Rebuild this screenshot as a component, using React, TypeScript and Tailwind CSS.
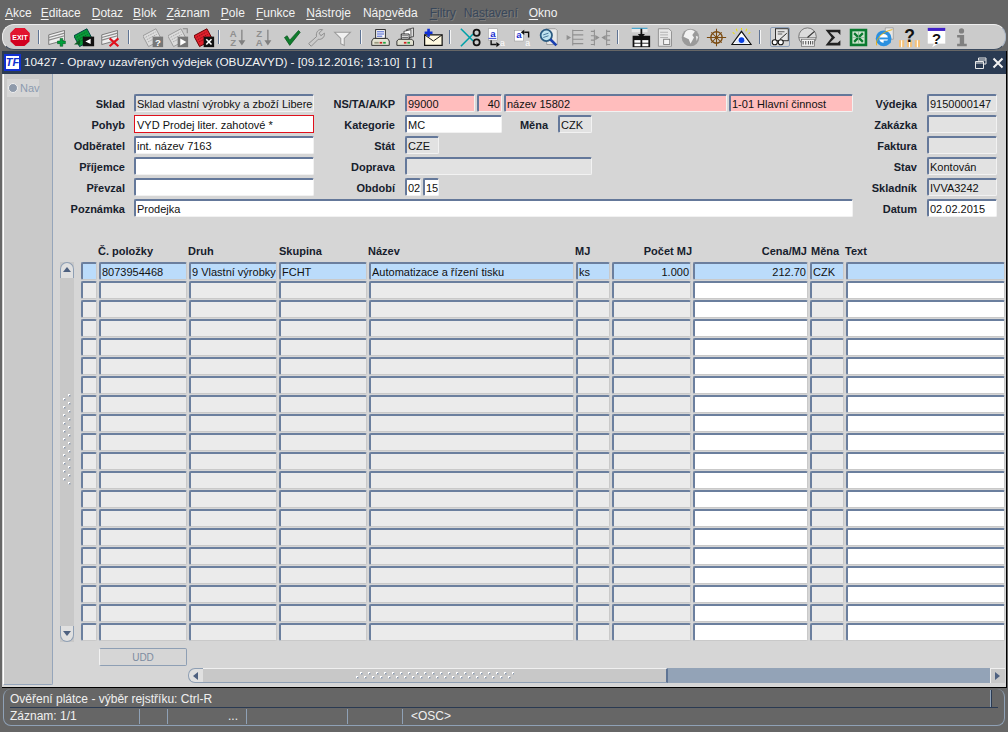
import React from "react";

const bevel =
  "border-t-2 border-l-2 border-r border-b border-t-[#64789a] border-l-[#64789a] border-r-[#f2f2f2] border-b-[#f2f2f2] rounded-[2px]";
const bevelCell =
  "border-t-2 border-l-2 border-r border-b border-t-[#6b7f9e] border-l-[#6b7f9e] border-r-[#c9c9c9] border-b-[#c9c9c9] rounded-[2px]";

function Field({
  w,
  bg = "bg-[#e2e2e2]",
  right,
  focus,
  cell,
  children,
}: {
  w: string;
  bg?: string;
  right?: boolean;
  focus?: boolean;
  cell?: boolean;
  children?: React.ReactNode;
}) {
  const border = focus
    ? "border border-[#e0101c] pl-[2px] pt-[1px]"
    : `${cell ? bevelCell : bevel} pl-[1px]`;
  return (
    <div
      className={`${w} ${bg} ${border} h-[18px] shrink-0 overflow-hidden whitespace-nowrap pr-[1px] text-[11px] leading-[16px] text-[#111] ${
        right ? "text-right" : ""
      }`}
    >
      {children}
    </div>
  );
}

function Lbl({ w, children }: { w: string; children: React.ReactNode }) {
  return (
    <div className={`${w} shrink-0 pt-[2px] text-right text-[11px] leading-[16px] font-bold text-[#16202c]`}>
      {children}
    </div>
  );
}

function Row({ children }: { children: React.ReactNode }) {
  return <div className="flex h-[18px] items-start">{children}</div>;
}

/* ---------- Toolbar icons ---------- */
function I({ children }: { children: React.ReactNode }) {
  return (
    <svg width="21" height="21" viewBox="0 0 24 24" className="m-[1.5px] block">
      {children}
    </svg>
  );
}

function Sheet({ dark = "#8a8a8a" }: { dark?: string }) {
  return (
    <g>
      <path d="M2 9 L20 4 L20 15 L2 20 Z" fill="#efefef" stroke="#555" strokeWidth="0.8" />
      <path d="M2 12 L20 7 M2 15 L20 10" stroke={dark} strokeWidth="1.4" />
    </g>
  );
}

function Card({ fill = "#dcdcdc", stroke = "#9a9a9a", dot = "#a8a8a8" }: { fill?: string; stroke?: string; dot?: string }) {
  return (
    <g transform="rotate(-28 11 12)">
      <rect x="2" y="5" width="17" height="14" fill={fill} stroke={stroke} strokeWidth="1" />
      <path d="M4 8 H17 M4 11 H17 M4 14 H14" stroke={dot} strokeWidth="1" strokeDasharray="2 1" />
    </g>
  );
}

const Exit = () => (
  <svg width="24" height="24" viewBox="0 0 24 24" className="block">
    <path d="M7.5 3 H16.5 L21.5 8 V16.5 L16.5 21 H7.5 L2.5 16.5 V8 Z" fill="#d2001f" />
    <path d="M7.5 3 H16.5 L21.5 8 V12 H2.5 V8 Z" fill="#e2142f" />
    <text x="12" y="14.6" textAnchor="middle" fontSize="7" fontWeight="700" fill="#fff" fontFamily="Liberation Sans, sans-serif">
      EXIT
    </text>
  </svg>
);
const AddRec = () => (
  <I>
    <Sheet />
    <path d="M15 13 h3 v3 h3 v3 h-3 v3 h-3 v-3 h-3 v-3 h3 z" fill="#00a03c" stroke="#004d18" strokeWidth="0.6" />
  </I>
);
const GreenRec = () => (
  <I>
    <Card fill="#0a9a3a" stroke="#044" dot="#066a28" />
    <path d="M0 20 L7 20 L7 14 Z" fill="#0b5d22" />
    <rect x="10" y="11" width="13" height="11" fill="#111" />
    <path d="M13 16.5 L19 13.5 V19.5 Z" fill="#fff" />
  </I>
);
const DelRec = () => (
  <I>
    <Sheet />
    <path d="M11 13 L21 22 M21 13 L11 22" stroke="#e0101c" strokeWidth="2.4" />
  </I>
);
const DocQ = () => (
  <I>
    <Card />
    <rect x="11" y="11" width="12" height="12" fill="#777" />
    <text x="17" y="21.5" textAnchor="middle" fontSize="11" fontWeight="700" fill="#fff" fontFamily="Liberation Sans, sans-serif">
      ?
    </text>
  </I>
);
const DocPlay = () => (
  <I>
    <Card />
    <path d="M17 2 H22 V7" stroke="#888" fill="none" strokeWidth="1.2" />
    <rect x="11" y="11" width="12" height="12" fill="#777" />
    <path d="M14 13 L21 17 L14 21 Z" fill="#fff" />
  </I>
);
const DocRed = () => (
  <I>
    <Card fill="#e0202c" stroke="#600" dot="#901018" />
    <rect x="11" y="11" width="12" height="12" fill="#111" />
    <path d="M14 14 L20 20 M20 14 L14 20" stroke="#fff" strokeWidth="1.8" />
  </I>
);
const SortAZ = ({ flip }: { flip?: boolean }) => (
  <I>
    <text x="7" y="11" textAnchor="middle" fontSize="11" fontWeight="700" fill="#8f8f8f" fontFamily="Liberation Sans, sans-serif">
      {flip ? "Z" : "A"}
    </text>
    <text x="7" y="22" textAnchor="middle" fontSize="11" fontWeight="700" fill="#8f8f8f" fontFamily="Liberation Sans, sans-serif">
      {flip ? "A" : "Z"}
    </text>
    <path d="M17 3 V17" stroke="#808080" strokeWidth="1.4" />
    <path d="M13 15 H21 L17 21 Z" fill="#808080" />
  </I>
);
const Check = () => (
  <I>
    <path d="M4 12 L7 10 L10 15 L20 4 L22 6 L10 21 Z" fill="#0f7d2c" stroke="#07501b" strokeWidth="0.8" />
  </I>
);
const Wrench = () => (
  <I>
    <path
      d="M3 19 L12 11 C11 6 14 2 19 3 L15 7 L17 10 L21 7 C22 11 18 15 14 14 L6 22 Z"
      fill="none"
      stroke="#8c8c8c"
      strokeWidth="1.1"
    />
  </I>
);
const Funnel = () => (
  <I>
    <path d="M3 6 H21 L14 13 V21 L10 19 V13 Z" fill="#f0f0f0" stroke="#9a9a9a" strokeWidth="1.2" />
  </I>
);
const Printer = () => (
  <I>
    <rect x="6.5" y="3" width="11" height="10" fill="#fff" stroke="#111" strokeWidth="1" />
    <path d="M8 5.5 H16 M8 8 H16 M8 10.5 H14" stroke="#2440c0" strokeWidth="1" />
    <path d="M4 13 H20 L22 16 V21 H2 V16 Z" fill="#e4e4d4" stroke="#222" strokeWidth="1" />
    <rect x="11" y="17" width="3" height="2" fill="#d02020" />
    <rect x="15" y="17" width="3" height="2" fill="#20a040" />
    <rect x="5" y="17" width="5" height="2" fill="#9a9a80" />
  </I>
);
const Printers = () => (
  <I>
    <path d="M12 3 L20 1 V11 L14 12 Z" fill="#ddd" stroke="#222" strokeWidth="0.8" />
    <path d="M9 5 L17 3 V12 L10 13 Z" fill="#fff" stroke="#222" strokeWidth="0.8" />
    <path d="M6 8 H15 V14 H6 Z" fill="#fff" stroke="#111" strokeWidth="1" />
    <path d="M7 10 H14 M7 12 H14" stroke="#555" />
    <path d="M3 14 H18 L20 16 V21 H1 V16 Z" fill="#e0e0d0" stroke="#222" strokeWidth="1" />
    <rect x="9" y="17" width="3" height="2" fill="#d02020" />
    <rect x="13" y="17" width="3" height="2" fill="#20a040" />
  </I>
);
const Mail = () => (
  <I>
    <rect x="3" y="9" width="20" height="12" fill="#fff9e0" stroke="#111" strokeWidth="1.4" />
    <path d="M3 9 L13 16 L23 9" fill="none" stroke="#111" strokeWidth="1.1" />
    <path d="M3 5 h3 v-3 h3 v3 h3 v3 h-3 v3 h-3 v-3 h-3 z" fill="#1030d8" />
  </I>
);
const Scissors = () => (
  <I>
    <path d="M1 2 L15 16" stroke="#00a0a8" strokeWidth="1.8" />
    <path d="M1 22 L15 8" stroke="#00a0a8" strokeWidth="1.8" />
    <ellipse cx="19" cy="6.5" rx="3.5" ry="3.5" fill="none" stroke="#111" strokeWidth="2" />
    <ellipse cx="19" cy="17.5" rx="3.5" ry="3.5" fill="none" stroke="#111" strokeWidth="2" />
  </I>
);
const CopyA = () => (
  <I>
    <rect x="4" y="2" width="10" height="13" fill="#fff" stroke="#999" strokeWidth="0.6" />
    <text x="9" y="11" textAnchor="middle" fontSize="11" fontWeight="700" fill="#1a30d0" fontFamily="Liberation Sans, sans-serif">
      a
    </text>
    <path d="M4 13 H13" stroke="#1a30d0" strokeWidth="1" />
    <path d="M7 15 V20 H13" fill="none" stroke="#111" strokeWidth="1.6" />
    <path d="M13 17 L17 20 L13 23 Z" fill="#111" />
    <text x="20" y="22" textAnchor="middle" fontSize="10" fill="#fff" fontFamily="Liberation Sans, sans-serif">
      a
    </text>
  </I>
);
const PasteA = () => (
  <I>
    <rect x="3" y="4" width="10" height="12" fill="#fff" stroke="#999" strokeWidth="0.6" />
    <text x="8" y="13" textAnchor="middle" fontSize="11" fontWeight="700" fill="#1a30d0" fontFamily="Liberation Sans, sans-serif">
      a
    </text>
    <path d="M19 12 V6 H14" fill="none" stroke="#111" strokeWidth="1.6" />
    <path d="M14 3 L10 6 L14 9 Z" fill="#111" />
    <text x="18" y="22" textAnchor="middle" fontSize="10" fill="#fff" fontFamily="Liberation Sans, sans-serif">
      a
    </text>
  </I>
);
const Magnify = () => (
  <I>
    <path d="M9 2 H20 L22 4 V20 L10 20 Z" fill="#e8e8e8" stroke="#888" strokeWidth="0.8" />
    <circle cx="9.5" cy="9.5" r="6.5" fill="#bfe3f0" stroke="#2a5a80" strokeWidth="2" />
    <path d="M6 9 L12 7 M6 12 L12 10" stroke="#3a6a90" strokeWidth="1" />
    <path d="M14 14 L21 21" stroke="#1a40b0" strokeWidth="3" />
  </I>
);
const ListA = () => (
  <I>
    <path d="M10 3 V21" stroke="#909090" strokeWidth="1.2" />
    <path d="M10 4 H22 M10 9 H22 M10 14 H22 M10 19 H22" stroke="#909090" strokeWidth="1.2" />
    <path d="M3 9 L8 12 L3 15 Z" fill="#909090" />
  </I>
);
const ListB = () => (
  <I>
    <path d="M5 3 V21 M19 3 V21" stroke="#909090" strokeWidth="1.2" />
    <path d="M1 5 H5 M1 10 H5 M1 15 H5 M1 20 H5 M19 5 H23 M19 10 H23 M19 15 H23 M19 20 H23" stroke="#909090" strokeWidth="1.2" />
    <path d="M6 9 L11 12 L6 15 Z M18 9 L13 12 L18 15 Z" fill="#909090" />
  </I>
);
const Form = () => (
  <I>
    <rect x="3" y="10" width="20" height="13" fill="#111" />
    <rect x="5" y="15" width="7" height="3" fill="#fff" />
    <rect x="14" y="15" width="7" height="3" fill="#fff" />
    <rect x="5" y="19" width="7" height="3" fill="#fff" />
    <rect x="14" y="19" width="7" height="3" fill="#fff" />
    <path d="M2 2 H20 V6 H2 Z" fill="#e8e8e8" />
    <path d="M2 1.5 H20" stroke="#30a0d0" strokeWidth="1.2" />
    <path d="M13 2 V9" stroke="#111" strokeWidth="2" />
    <path d="M9 8 H17 L13 13 Z" fill="#111" />
  </I>
);
const Page = () => (
  <I>
    <path d="M5 2 H17 L20 5 V22 H5 Z" fill="#e8e8e8" stroke="#8a8a8a" strokeWidth="1" />
    <path d="M7 6 H16 M7 9 H16 M7 12 H16" stroke="#aaa" strokeWidth="1" />
    <rect x="11" y="14" width="7" height="6" fill="#f4f4f4" stroke="#777" strokeWidth="1" />
  </I>
);
const Globe = () => (
  <I>
    <circle cx="12" cy="12" r="10" fill="#9a9a9a" />
    <path d="M6 6 C9 2 14 3 17 5 L14 9 L16 12 L12 19 L10 14 L4 11 Z" fill="#f2f2f2" />
    <path d="M18 10 L21 11 L19 16 Z" fill="#e4e4e4" />
  </I>
);
const Wheel = () => (
  <I>
    <circle cx="12" cy="12" r="6.5" fill="none" stroke="#7a4a10" strokeWidth="1.6" />
    <circle cx="12" cy="12" r="1.8" fill="#7a4a10" />
    <path d="M12 2 V22 M1 12 H23 M6 6 L18 18 M18 6 L6 18" stroke="#7a4a10" strokeWidth="1.2" />
  </I>
);
const Eye = () => (
  <I>
    <path d="M12 5 L23 20 H1 Z" fill="#fff" stroke="#111" strokeWidth="1.4" />
    <path d="M4 18 Q12 9 20 18 Q12 20 4 18 Z" fill="#dfe8f8" />
    <circle cx="12" cy="15" r="3.2" fill="#0a40e0" />
    <path d="M12 1 V3 M6 2 L7 5 M18 2 L17 5 M2 6 L4 8 M22 6 L20 8" stroke="#f0e000" strokeWidth="1.2" />
  </I>
);
const Glasses = () => (
  <svg width="18" height="18" viewBox="0 0 24 24" className="block">
    <rect x="6" y="1" width="17" height="16" fill="#e4e4e4" stroke="#111" strokeWidth="1.1" />
    <path d="M9 5 H18 M9 8 H15" stroke="#333" strokeWidth="1" />
    <path d="M12 15 L21 7" stroke="#111" strokeWidth="1.2" />
    <circle cx="5" cy="19" r="3.4" fill="#fff" stroke="#111" strokeWidth="1.4" />
    <circle cx="13" cy="19" r="3.4" fill="#fff" stroke="#111" strokeWidth="1.4" />
  </svg>
);
const Gauge = () => (
  <I>
    <circle cx="12" cy="11" r="10" fill="#dcdcdc" stroke="#6a6a6a" strokeWidth="1" />
    <path d="M2 12 H22" stroke="#777" strokeWidth="0.8" />
    <path d="M12 12 L20 5" stroke="#333" strokeWidth="1.4" />
    <rect x="5" y="14" width="15" height="8" fill="#f4f4f4" stroke="#666" strokeWidth="0.8" />
    <path d="M7 16 V20 M10 16 V20 M13 16 V20 M15.5 16 V20 M18 16 V20" stroke="#333" strokeWidth="1" />
  </I>
);
const Sigma = () => (
  <I>
    <path d="M4 3 H21 V9 L18 6 H9 L15 12 L9 18 H18 L21 15 V21 H4 L11 12 Z" fill="#222" />
  </I>
);
const Excel = () => (
  <I>
    <rect x="2" y="2" width="20" height="20" fill="#0a7a30" />
    <rect x="5" y="5" width="14" height="14" fill="#cfe4cf" />
    <path d="M7 7 L17 17 M17 7 L7 17" stroke="#0a7a30" strokeWidth="2.6" />
    <path d="M5 12 H19 M12 5 V19" stroke="#7fb08f" strokeWidth="0.8" />
  </I>
);
const IE = () => (
  <I>
    <path d="M13 1 H22 V14 H12 Z" fill="#e8e8e8" stroke="#888" strokeWidth="0.7" />
    <circle cx="11" cy="13" r="9" fill="#2a90e0" />
    <circle cx="11" cy="13" r="5" fill="#fff" />
    <rect x="6" y="12" width="10" height="2.2" fill="#2a90e0" />
    <rect x="11" y="15.5" width="8" height="3" fill="#2a90e0" />
    <path d="M3 21 C1 14 10 5 21 3" fill="none" stroke="#f0b000" strokeWidth="1" />
  </I>
);
const HelpPeople = () => (
  <I>
    <rect x="0" y="15" width="6" height="8" fill="#f5c27a" />
    <rect x="9" y="15" width="6" height="8" fill="#f5c27a" />
    <rect x="18" y="15" width="6" height="8" fill="#f5c27a" />
    <path d="M3 15 V23 M12 15 V23 M21 15 V23" stroke="#fff" strokeWidth="1.2" />
    <text x="12" y="17" textAnchor="middle" fontSize="20" fontWeight="900" fill="#111" fontFamily="Liberation Sans, sans-serif">
      ?
    </text>
  </I>
);
const HelpWin = () => (
  <I>
    <rect x="2" y="3" width="20" height="16" fill="#fff" />
    <rect x="2" y="1" width="20" height="3.5" fill="#4020c8" />
    <path d="M9 19 L7 23 L14 19 Z" fill="#fff" />
    <text x="12" y="19" textAnchor="middle" fontSize="17" fontWeight="900" fill="#111" fontFamily="Liberation Sans, sans-serif">
      ?
    </text>
  </I>
);
const Info = () => (
  <I>
    <circle cx="12" cy="4.5" r="3" fill="#808080" />
    <path d="M7 9 H15 V19 H18 V22 H7 V19 H10 V12 H7 Z" fill="#808080" />
  </I>
);

function T({ w, children }: { w: string; children: React.ReactNode }) {
  return <div className={`${w} shrink-0`}>{children}</div>;
}
function Sep({ w }: { w: string }) {
  return (
    <div className={`${w} shrink-0 pt-[5px]`}>
      <div className="h-[14px] w-[2px] border-l border-l-[#5f7494] bg-[#f4f4f4]" />
    </div>
  );
}

function Toolbar() {
  return (
    <div className="mx-[2px] flex h-[26px] items-start rounded-[12px] border-t border-r border-b border-l border-t-[#eeeeee] border-r-[#a8b4c4] border-b-[#3b4a5e] border-l-[#eeeeee] bg-[#cbcbcb] pl-[5px]">
      <T w="w-[30px]"><Exit /></T>
      <Sep w="w-[7px]" />
      <T w="w-[27px]"><AddRec /></T>
      <T w="w-[26px]"><GreenRec /></T>
      <T w="w-[30px]"><DelRec /></T>
      <Sep w="w-[13px]" />
      <T w="w-[25px]"><DocQ /></T>
      <T w="w-[26px]"><DocPlay /></T>
      <T w="w-[26px]"><DocRed /></T>
      <Sep w="w-[7px]" />
      <T w="w-[26px]"><SortAZ /></T>
      <T w="w-[28px]"><SortAZ flip /></T>
      <T w="w-[25px]"><Check /></T>
      <T w="w-[26px]"><Wrench /></T>
      <T w="w-[30px]"><Funnel /></T>
      <Sep w="w-[8px]" />
      <T w="w-[26px]"><Printer /></T>
      <T w="w-[26px]"><Printers /></T>
      <T w="w-[29px]"><Mail /></T>
      <Sep w="w-[9px]" />
      <T w="w-[25px]"><Scissors /></T>
      <T w="w-[27px]"><CopyA /></T>
      <T w="w-[26px]"><PasteA /></T>
      <T w="w-[26px]"><Magnify /></T>
      <T w="w-[26px]"><ListA /></T>
      <T w="w-[29px]"><ListB /></T>
      <Sep w="w-[11px]" />
      <T w="w-[24px]"><Form /></T>
      <T w="w-[26px]"><Page /></T>
      <T w="w-[26px]"><Globe /></T>
      <T w="w-[25px]"><Wheel /></T>
      <T w="w-[30px]"><Eye /></T>
      <Sep w="w-[9px]" />
      <T w="w-[27px]">
        <div className="mt-[2px] ml-[2px] flex h-[20px] w-[20px] items-center justify-center rounded-[2px] border border-[#8ea0b8] bg-[#d4d4d4]">
          <Glasses />
        </div>
      </T>
      <T w="w-[25px]"><Gauge /></T>
      <T w="w-[26px]"><Sigma /></T>
      <T w="w-[26px]"><Excel /></T>
      <T w="w-[25px]"><IE /></T>
      <T w="w-[27px]"><HelpPeople /></T>
      <T w="w-[25px]"><HelpWin /></T>
      <T w="w-[24px]"><Info /></T>
    </div>
  );
}

function M({ k, rest, pre, off, ml }: { k: string; rest: string; pre?: string; off?: boolean; ml: string }) {
  return (
    <span className={`${ml} whitespace-nowrap ${off ? "text-[#38475a] [text-shadow:1px_1px_0_#7c7c7c]" : "text-[#f2f2f2]"}`}>
      {pre}
      <span className="underline underline-offset-2">{k}</span>
      {rest}
    </span>
  );
}

function Grip({ vertical }: { vertical?: boolean }) {
  const dots = Array.from({ length: 20 }, (_, i) => i);
  if (vertical) {
    return (
      <svg width="8" height="92" viewBox="0 0 8 92" className="block">
        {dots.slice(0, 12).map((i) => (
          <g key={i}>
            <rect x="5" y={i * 8} width="2" height="2" fill="#fff" />
            <rect x="6" y={i * 8 + 1} width="1.5" height="1.5" fill="#8d9bb0" />
            <rect x="0" y={i * 8 + 4} width="2" height="2" fill="#fff" />
            <rect x="1" y={i * 8 + 5} width="1.5" height="1.5" fill="#8d9bb0" />
          </g>
        ))}
      </svg>
    );
  }
  return (
    <svg width="158" height="7" viewBox="0 0 158 7" className="block">
      {dots.map((i) => (
        <g key={i}>
          <rect x={i * 8 + 4} y="0" width="2" height="2" fill="#fff" />
          <rect x={i * 8 + 5} y="1" width="1.5" height="1.5" fill="#8d9bb0" />
          <rect x={i * 8} y="4" width="2" height="2" fill="#fff" />
          <rect x={i * 8 + 1} y="5" width="1.5" height="1.5" fill="#8d9bb0" />
        </g>
      ))}
    </svg>
  );
}

function Tri({ dir }: { dir: "up" | "down" | "left" | "right" }) {
  const p = {
    up: "M1 6 L9 6 L5 1 Z",
    down: "M1 2 L9 2 L5 7 Z",
    left: "M7 1 L7 9 L2 5 Z",
    right: "M2 1 L2 9 L7 5 Z",
  }[dir];
  return (
    <svg width="10" height="10" viewBox="0 0 10 10" className="block">
      <path d={p} fill="#4e6180" />
    </svg>
  );
}

const emptyRows = Array.from({ length: 19 }, (_, i) => i);
const grey = "bg-[#ebebeb]";
const white = "bg-white";
const sel = "bg-[#bbdcfb]";
const cols = "grid grid-cols-[16px_88px_88px_88px_205px_34px_79px_115px_34px_159px] gap-x-[2px]";

function Cell({ bg, right, children }: { bg: string; right?: boolean; children?: React.ReactNode }) {
  return <Field w="w-full" bg={bg} right={right} cell>{children}</Field>;
}

function H({ children, right, cls = "" }: { children?: React.ReactNode; right?: boolean; cls?: string }) {
  return (
    <div className={`whitespace-nowrap text-[11px] leading-[16px] font-bold text-[#16202c] ${right ? "text-right" : ""} ${cls}`}>
      {children}
    </div>
  );
}

export default function App() {
  return (
    <div className="flex h-[732px] w-[1008px] flex-col overflow-hidden bg-[#666666] font-['Liberation_Sans',Arial,sans-serif]">
      {/* menu */}
      <div className="flex h-[24px] items-center pt-[2px] text-[12px]">
        <M ml="ml-[5px]" k="A" rest="kce" />
        <M ml="ml-[9px]" k="E" rest="ditace" />
        <M ml="ml-[11px]" k="D" rest="otaz" />
        <M ml="ml-[10px]" k="B" rest="lok" />
        <M ml="ml-[10px]" k="Z" rest="áznam" />
        <M ml="ml-[11px]" k="P" rest="ole" />
        <M ml="ml-[11px]" k="F" rest="unkce" />
        <M ml="ml-[11px]" k="N" rest="ástroje" />
        <M ml="ml-[12px]" pre="Náp" k="o" rest="věda" />
        <M ml="ml-[12px]" off k="F" rest="iltry" />
        <M ml="ml-[8px]" off pre="Na" k="s" rest="tavení" />
        <M ml="ml-[11px]" k="O" rest="kno" />
      </div>

      <Toolbar />

      {/* window */}
      <div className="mt-px mr-[1px] ml-[2px] flex h-[637px] flex-col border-r border-b border-r-black border-b-black">
        {/* title */}
        <div className="flex h-[23px] shrink-0 items-center bg-[#2a3a52] pl-[2px] text-[11.8px] text-[#f4f4f4]">
          <div className="mr-[3px] flex h-[17px] w-[17px] shrink-0 items-center justify-center border-2 border-[#1030d0] bg-white text-[11px] leading-none font-bold italic text-[#1030d0]">
            TF
          </div>
          <span className="whitespace-nowrap">10427 - Opravy uzavřených výdejek (OBUZAVYD) - [09.12.2016; 13:10]&nbsp; [ ]&nbsp; [ ]</span>
          <div className="ml-auto flex items-center gap-[5px] pr-[2px]">
            <svg width="12" height="12" viewBox="0 0 12 12" className="block">
              <path d="M3.5 3.5 V1 H11 V7 H8.5 M3.5 3 H11" fill="none" stroke="#e8e8e8" strokeWidth="1" />
              <path d="M0.5 4.5 H8.5 V11.5 H0.5 Z M0.5 6 H8.5" fill="none" stroke="#e8e8e8" strokeWidth="1" />
            </svg>
            <svg width="12" height="12" viewBox="0 0 12 12" className="block">
              <path d="M1.5 1.5 L10.5 10.5 M10.5 1.5 L1.5 10.5" stroke="#f2f2f2" strokeWidth="2" />
            </svg>
          </div>
        </div>

        {/* body */}
        <div className="flex min-h-0 flex-1 bg-[#d6d6d6]">
          {/* nav */}
          <div className="mb-[2px] ml-px flex w-[50px] shrink-0 flex-col rounded-br-[2px] border-r border-b border-l border-r-[#95a5ba] border-b-[#95a5ba] border-l-white bg-[#c9c9c9] pt-[5px] pl-[3px]">
            <div className="flex h-[18px] w-[32px] items-center bg-[#d6d6d6] text-[11px] text-[#8c9bb0]">
              <span className="mr-[2px] ml-[1px] h-[10px] w-[10px] shrink-0 rounded-full border border-[#f0f0f0] bg-[#8e9aab]" />
              Nav
            </div>
          </div>

          {/* main */}
          <div className="flex min-w-0 flex-1 flex-col pt-[20px]">
            <div className="flex">
              <div className="flex w-[800px] shrink-0 flex-col gap-[3px]">
                <div className="flex">
                  <div className="flex flex-col gap-[3px]">
                    <Row><Lbl w="w-[72px]">Sklad</Lbl><div className="w-[9px]" /><Field w="w-[180px]">Sklad vlastní výrobky a zboží Liberec</Field></Row>
                    <Row><Lbl w="w-[72px]">Pohyb</Lbl><div className="w-[9px]" /><Field w="w-[180px]" bg={white} focus>VYD Prodej liter. zahotové *</Field></Row>
                    <Row><Lbl w="w-[72px]">Odběratel</Lbl><div className="w-[9px]" /><Field w="w-[180px]" bg={white}>int. název 7163</Field></Row>
                    <Row><Lbl w="w-[72px]">Příjemce</Lbl><div className="w-[9px]" /><Field w="w-[180px]" bg={white} /></Row>
                    <Row><Lbl w="w-[72px]">Převzal</Lbl><div className="w-[9px]" /><Field w="w-[180px]" bg={white} /></Row>
                  </div>
                  <div className="flex flex-col gap-[3px]">
                    <Row>
                      <Lbl w="w-[81px]">NS/TA/A/KP</Lbl><div className="w-[10px]" />
                      <div className="flex gap-[2px]">
                        <Field w="w-[70px]" bg="bg-[#ffbdbd]">99000</Field>
                        <Field w="w-[25px]" bg="bg-[#ffbdbd]" right>40</Field>
                        <Field w="w-[223px]" bg="bg-[#ffbdbd]">název 15802</Field>
                        <Field w="w-[124px]" bg="bg-[#ffbdbd]">1-01 Hlavní činnost</Field>
                      </div>
                    </Row>
                    <Row>
                      <Lbl w="w-[81px]">Kategorie</Lbl><div className="w-[10px]" />
                      <Field w="w-[97px]" bg={white}>MC</Field>
                      <Lbl w="w-[46px]">Měna</Lbl><div className="w-[10px]" />
                      <Field w="w-[34px]">CZK</Field>
                    </Row>
                    <Row>
                      <Lbl w="w-[81px]">Stát</Lbl><div className="w-[10px]" />
                      <Field w="w-[34px]">CZE</Field>
                    </Row>
                    <Row>
                      <Lbl w="w-[81px]">Doprava</Lbl><div className="w-[10px]" />
                      <Field w="w-[187px]" />
                    </Row>
                    <Row>
                      <Lbl w="w-[81px]">Období</Lbl><div className="w-[10px]" />
                      <div className="flex gap-[2px]">
                        <Field w="w-[16px]" bg={white}>02</Field>
                        <Field w="w-[16px]" bg={white}>15</Field>
                      </div>
                    </Row>
                  </div>
                </div>
                <Row><Lbl w="w-[72px]">Poznámka</Lbl><div className="w-[9px]" /><Field w="w-[719px]" bg={white}>Prodejka</Field></Row>
              </div>
              <div className="flex flex-col gap-[3px]">
                <Row><Lbl w="w-[64px]">Výdejka</Lbl><div className="w-[10px]" /><Field w="w-[70px]">9150000147</Field></Row>
                <Row><Lbl w="w-[64px]">Zakázka</Lbl><div className="w-[10px]" /><Field w="w-[70px]" /></Row>
                <Row><Lbl w="w-[64px]">Faktura</Lbl><div className="w-[10px]" /><Field w="w-[70px]" /></Row>
                <Row><Lbl w="w-[64px]">Stav</Lbl><div className="w-[10px]" /><Field w="w-[70px]">Kontován</Field></Row>
                <Row><Lbl w="w-[64px]">Skladník</Lbl><div className="w-[10px]" /><Field w="w-[70px]">IVVA3242</Field></Row>
                <Row><Lbl w="w-[64px]">Datum</Lbl><div className="w-[10px]" /><Field w="w-[70px]" bg={white}>02.02.2015</Field></Row>
              </div>
            </div>

            {/* table */}
            <div className="mt-[26px] ml-[7px] flex">
              <div className="mr-[7px] w-[14px] shrink-0 pt-[19px]">
                <div className="flex h-[380px] flex-col items-center bg-[#c8c8c8]">
                  <div className="flex h-[16px] w-[14px] shrink-0 items-center justify-center rounded-t-[7px] border-t border-r border-l border-[#8e9fb4] bg-[#e0e0e0]">
                    <Tri dir="up" />
                  </div>
                  <div className="flex flex-1 flex-col pt-[116px]">
                    <Grip vertical />
                  </div>
                  <div className="flex h-[16px] w-[14px] shrink-0 items-center justify-center rounded-b-[7px] border-r border-b border-l border-[#8e9fb4] bg-[#e0e0e0]">
                    <Tri dir="down" />
                  </div>
                </div>
              </div>
              <div className="flex flex-col">
                <div className={`${cols} mb-px h-[18px]`}>
                  <H />
                  <H cls="-ml-[1px]">Č. položky</H>
                  <H cls="-ml-[1px]">Druh</H>
                  <H>Skupina</H>
                  <H cls="-ml-[1px]">Název</H>
                  <H cls="-ml-[1px]">MJ</H>
                  <H right cls="mr-[-1px]">Počet MJ</H>
                  <H right cls="mr-[1px]">Cena/MJ</H>
                  <H cls="ml-[1px]">Měna</H>
                  <H cls="-ml-[1px]">Text</H>
                </div>
                <div className="flex flex-col gap-y-[1px]">
                  <div className={cols}>
                    <Cell bg={sel} />
                    <Cell bg={sel}>8073954468</Cell>
                    <Cell bg={sel}>9 Vlastní výrobky</Cell>
                    <Cell bg={sel}>FCHT</Cell>
                    <Cell bg={sel}>Automatizace a řízení tisku</Cell>
                    <Cell bg={sel}>ks</Cell>
                    <Cell bg={sel} right>1.000</Cell>
                    <Cell bg={sel} right>212.70</Cell>
                    <Cell bg={sel}>CZK</Cell>
                    <Cell bg={sel} />
                  </div>
                  {emptyRows.map((i) => (
                    <div key={i} className={cols}>
                      <Cell bg={grey} />
                      <Cell bg={grey} />
                      <Cell bg={grey} />
                      <Cell bg={grey} />
                      <Cell bg={grey} />
                      <Cell bg={grey} />
                      <Cell bg={grey} />
                      <Cell bg={white} />
                      <Cell bg={grey} />
                      <Cell bg={white} />
                    </div>
                  ))}
                </div>
              </div>
            </div>

            {/* UDD */}
            <div className="mt-[6px] ml-[46px] flex h-[18px] w-[88px] items-center justify-center rounded-[2px] border-t border-r border-b border-l border-t-[#8e9fb4] border-r-[#8e9fb4] border-b-[#8e9fb4] border-l-[#f2f2f2] text-[10px] text-[#7d8ca0]">
              UDD
            </div>

            {/* horizontal scrollbar */}
            <div className="mt-[2px] ml-[135px] flex h-[15px] w-[817px]">
              <div className="flex w-[15px] shrink-0 items-center justify-center rounded-l-[7px] border-t border-b border-l border-[#8e9fb4] bg-[#e0e0e0]">
                <Tri dir="left" />
              </div>
              <div className="flex w-[465px] shrink-0 items-center justify-center border-t border-r-2 border-b border-t-[#f0f0f0] border-r-[#5f7494] border-b-[#8e9fb4] bg-[#c8c8c8]">
                <Grip />
              </div>
              <div className="flex-1 bg-[#93a3b7]" />
              <div className="flex w-[15px] shrink-0 items-center justify-center border-t border-l border-t-[#f0f0f0] border-l-[#f0f0f0] bg-[#c8c8c8]">
                <Tri dir="right" />
              </div>
            </div>
          </div>
        </div>
      </div>

      {/* status */}
      <div className="mx-[3px] mt-[1px] flex h-[37px] flex-col rounded-[8px] border-r border-b border-l border-r-[#8fa1b6] border-b-[#8fa1b6] border-l-[#8fa1b6] text-[12px] text-[#f0f0f0]">
        <div className="mx-[6px] flex h-[19px] shrink-0 items-center justify-between border-b border-b-[#2a3a52] pt-[1px]">
          <span>Ověření plátce - výběr rejstříku: Ctrl-R</span>
          <div className="mr-[6px] h-[17px] w-[2px] border-r border-l border-r-[#2a3a52] border-l-[#8fa1b6]" />
        </div>
        <div className="ml-[6px] flex h-[18px] items-center">
          <div className="h-[15px] w-[130px] shrink-0 border-r border-r-[#8fa1b6] leading-[15px]">Záznam: 1/1</div>
          <div className="h-[15px] w-[28px] shrink-0 border-r border-r-[#8fa1b6]" />
          <div className="h-[15px] w-[79px] shrink-0 border-r border-r-[#8fa1b6] pr-[8px] text-right leading-[15px]">...</div>
          <div className="h-[15px] w-[101px] shrink-0 border-r border-r-[#8fa1b6]" />
          <div className="h-[15px] w-[55px] shrink-0 border-r border-r-[#8fa1b6]" />
          <span className="ml-[8px] leading-[15px]">&lt;OSC&gt;</span>
        </div>
      </div>
    </div>
  );
}
